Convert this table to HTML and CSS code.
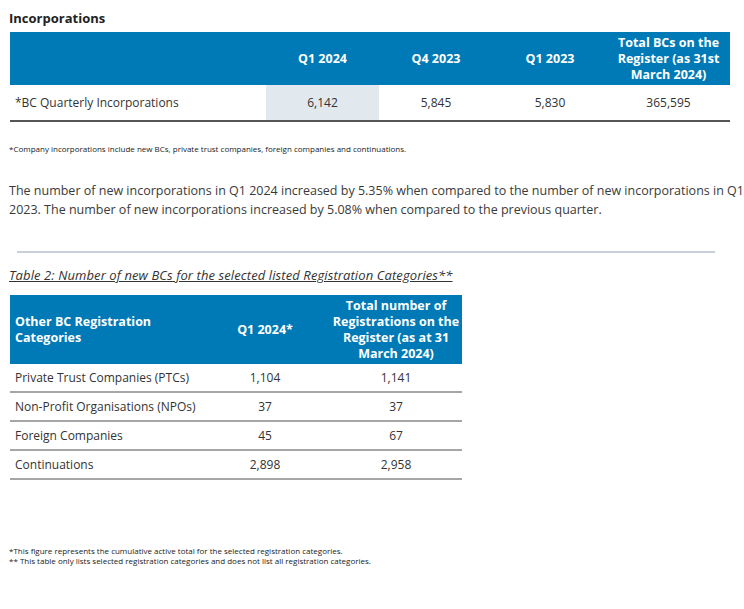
FILE: index.html
```html
<!DOCTYPE html>
<html>
<head>
<meta charset="utf-8">
<link rel="stylesheet" href="styles.css">
</head>
<body>
<div class="page">
  <h2 class="title">Incorporations</h2>
  <table class="t1">
    <colgroup><col class="c1"><col class="c2"><col class="c3"><col class="c4"><col class="c5"></colgroup>
    <thead>
      <tr><th></th><th>Q1 2024</th><th>Q4 2023</th><th>Q1 2023</th><th>Total BCs on the<br>Register (as 31st<br>March 2024)</th></tr>
    </thead>
    <tbody>
      <tr><td class="label">*BC Quarterly Incorporations</td><td class="shade">6,142</td><td>5,845</td><td>5,830</td><td>365,595</td></tr>
    </tbody>
  </table>
  <p class="note">*Company incorporations include new BCs, private trust companies, foreign companies and continuations.</p>
  <p class="body">The number of new incorporations in Q1 2024 increased by 5.35% when compared to the number of new incorporations in Q1 2023. The number of new incorporations increased by 5.08% when compared to the previous quarter.</p>
  <div class="rule"></div>
  <p class="caption">Table 2: Number of new BCs for the selected listed Registration Categories**</p>
  <table class="t2">
    <colgroup><col class="d1"><col class="d2"><col class="d3"></colgroup>
    <thead>
      <tr><th class="left">Other BC Registration<br>Categories</th><th>Q1 2024*</th><th>Total number of<br>Registrations on the<br>Register (as at 31<br>March 2024)</th></tr>
    </thead>
    <tbody>
      <tr><td class="label">Private Trust Companies (PTCs)</td><td>1,104</td><td>1,141</td></tr>
      <tr><td class="label">Non-Profit Organisations (NPOs)</td><td>37</td><td>37</td></tr>
      <tr><td class="label">Foreign Companies</td><td>45</td><td>67</td></tr>
      <tr><td class="label">Continuations</td><td>2,898</td><td>2,958</td></tr>
    </tbody>
  </table>
  <div class="foot">
    <p>*This figure represents the cumulative active total for the selected registration categories.</p>
    <p>** This table only lists selected registration categories and does not list all registration categories.</p>
  </div>
</div>
</body>
</html>
```

FILE: styles.css
```css
html, body { margin: 0; padding: 0; background: #fff; }
body { font-family: "Open Sans", "Liberation Sans", sans-serif; color: #333; }
.page { padding: 0 0 0 9px; }
.title { margin: 0; padding-top: 10px; font-size: 13px; line-height: 16px; font-weight: 700; color: #222; }
table { border-collapse: collapse; table-layout: fixed; }
.t1 { width: 720px; margin: 6px 0 0 1px; }
.c1 { width: 256px; } .c2 { width: 113px; } .c3 { width: 114px; } .c4 { width: 114px; } .c5 { width: 123px; }
th { background: #007ab6; color: #fff; font-weight: 700; font-size: 12.5px; line-height: 16px; padding: 0; text-align: center; }
.t1 th { height: 53px; }
.t1 td { height: 35px; padding: 0; text-align: center; font-size: 12px; color: #333; border-bottom: 2px solid #555; }
.t1 td.label, .t2 td.label { text-align: left; padding-left: 5px; }
.t1 td.shade { background: #e2e9ee; }
.note { margin: 22px 0 0 0; font-size: 8px; line-height: 10px; color: #222; }
.body { margin: 27px 0 0 0; font-size: 12.5px; line-height: 19px; color: #3a3a3a; width: 735px; }
.rule { margin: 32px 0 0 8px; width: 698px; height: 2px; background: #c8d0da; }
.caption { margin: 14px 0 0 0; font-size: 13px; line-height: 16px; font-style: italic; text-decoration: underline; color: #333; letter-spacing: 0.1px; }
.t2 { width: 452px; margin: 12px 0 0 1px; }
.d1 { width: 190px; } .d2 { width: 130px; } .d3 { width: 132px; }
.t2 th { height: 69px; }
.t2 th.left { text-align: left; padding-left: 5px; }
.t2 td { height: 27px; padding: 0; text-align: center; font-size: 12px; color: #333; border-bottom: 2px solid #a6a6a6; }
.foot { margin-top: 66px; }
.foot p { margin: 0; font-size: 8px; line-height: 10px; color: #222; }
```
